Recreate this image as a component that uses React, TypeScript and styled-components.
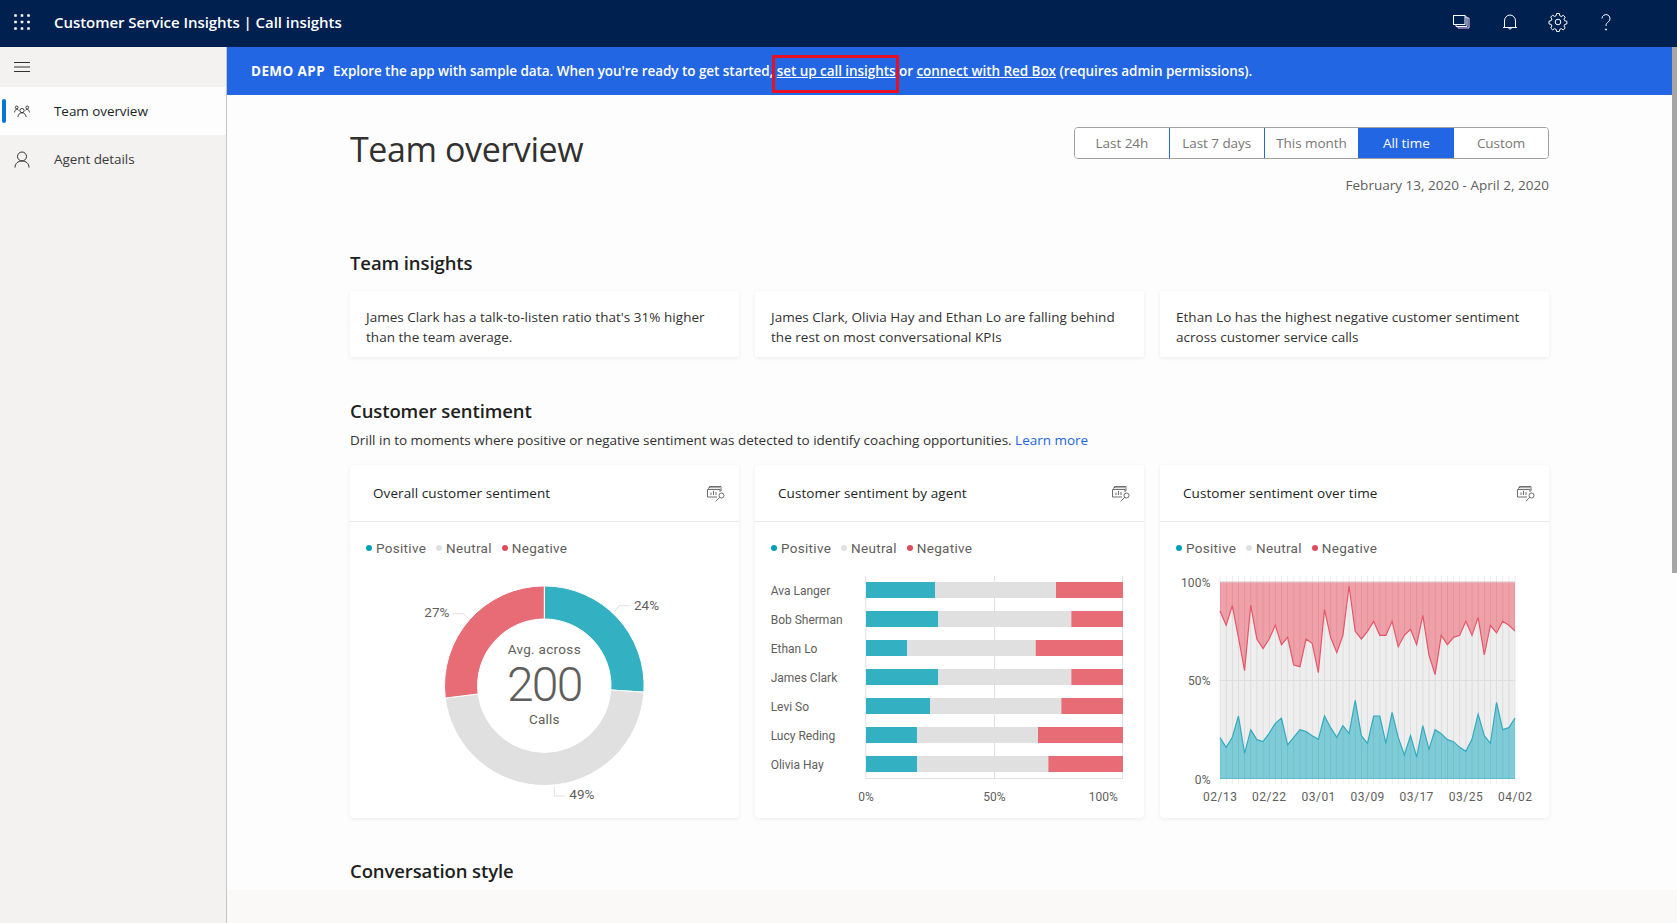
import React from "react";
import styled, { createGlobalStyle } from "styled-components";

const Global = createGlobalStyle`
  html, body { margin: 0; padding: 0; height: 100%; overflow: hidden; background: #faf9f8; }
  body { font-family: "Open Sans", "Noto Sans", sans-serif; }
  #root { height: 100%; }
  * { box-sizing: border-box; }
`;

const Page = styled.div`
  height: 923px;
  display: flex;
  flex-direction: column;
`;
const TopBar = styled.header`
  height: 47px;
  flex: none;
  background: #002050;
  color: #fff;
  display: flex;
  align-items: center;
  padding-bottom: 3px;
`;
const Waffle = styled.div`
  width: 54px;
  padding-left: 14px;
  display: flex;
`;
const AppTitle = styled.div`
  font-size: 15px;
  font-weight: 600;
  letter-spacing: -0.05px;
  flex: 1;
`;
const TopIcons = styled.div`
  display: flex;
  gap: 24px;
  padding-right: 59px;
`;
const TopIcon = styled.div`
  width: 24px;
  height: 24px;
  display: flex;
  align-items: center;
  justify-content: center;
`;
const Body = styled.div`
  flex: 1;
  display: flex;
  min-height: 0;
`;
const Side = styled.nav`
  width: 227px;
  flex: none;
  background: #f3f2f1;
  border-right: 1px solid #c8c6c4;
`;
const Burger = styled.div`
  height: 40px;
  padding-left: 14px;
  display: flex;
  align-items: center;
`;
const NavItem = styled.div<{ $active?: boolean }>`
  height: 48px;
  display: flex;
  align-items: center;
  position: relative;
  background: ${(p) => (p.$active ? "#fdfdfd" : "transparent")};
  color: ${(p) => (p.$active ? "#201f1e" : "#3b3a39")};
  font-size: 13.5px;
  letter-spacing: -0.07px;
  font-weight: ${(p) => (p.$active ? 500 : 400)};
  ${(p) =>
    p.$active
      ? `&::before { content: ""; position: absolute; left: 2px; top: 12px; width: 4px; height: 24px; border-radius: 2px; background: #0078d4; }`
      : ""}
`;
const NavIcon = styled.div`
  width: 54px;
  padding-left: 14px;
  display: flex;
`;
const Main = styled.main`
  flex: 1;
  min-width: 0;
  display: flex;
  flex-direction: column;
  position: relative;
`;
const Banner = styled.div`
  height: 48px;
  flex: none;
  background: #2266e3;
  color: #fff;
  font-size: 13.5px;
  font-weight: 600;
  letter-spacing: -0.05px;
  display: flex;
  align-items: center;
  padding-left: 24px;
  white-space: pre;
  a { color: #fff; text-decoration: underline; }
`;
const Strong = styled.strong`
  font-weight: 700;
  letter-spacing: 0.4px;
  margin-right: 8px;
`;
const HighlightBox = styled.div`
  position: absolute;
  left: 545px;
  top: 8px;
  width: 127px;
  height: 38px;
  border: 3px solid #e81123;
`;
const Scrollbar = styled.div`
  position: absolute;
  right: 0;
  top: 0;
  width: 5px;
  height: 526px;
  background: #a6a6a6;
`;
const Content = styled.div`
  height: 795px;
  flex: none;
  background: #fdfdfd;
  padding: 0 128px 0 123px;
  overflow: hidden;
`;
const HeadRow = styled.div`
  display: flex;
  justify-content: space-between;
  align-items: flex-start;
  padding-top: 32px;
  height: 155px;
`;
const PageTitle = styled.h1`
  margin: 0;
  font-size: 34px;
  font-weight: 500;
  letter-spacing: -0.4px;
  color: #323130;
  line-height: 44px;
`;
const RangeBox = styled.div`
  display: flex;
  flex-direction: column;
  align-items: flex-end;
`;
const Segs = styled.div`
  display: flex;
  width: 475px;
  height: 32px;
  border: 1px solid #a19f9d;
  border-radius: 4px;
  background: #fff;
  overflow: hidden;
`;
const Seg = styled.div<{ $on?: boolean }>`
  flex: 1;
  display: flex;
  align-items: center;
  justify-content: center;
  font-size: 13.5px;
  letter-spacing: -0.05px;
  background: ${(p) => (p.$on ? "#2266e3" : "#fff")};
  color: ${(p) => (p.$on ? "#fff" : "#797775")};
  font-weight: ${(p) => (p.$on ? 500 : 400)};
  & + & { border-left: 1px solid ${(p) => (p.$on ? "#2266e3" : "#a19f9d")}; }
`;
const Dates = styled.div`
  margin-top: 17px;
  font-size: 13.5px;
  letter-spacing: 0.02px;
  color: #605e5c;
`;
const SectionTitle = styled.h2<{ $top?: number }>`
  margin: ${(p) => p.$top ?? 0}px 0 0;
  font-size: 18.5px;
  font-weight: 600;
  letter-spacing: -0.1px;
  color: #201f1e;
  line-height: 26px;
`;
const Cards3 = styled.div<{ $top: number }>`
  display: grid;
  grid-template-columns: repeat(3, 389px);
  gap: 16px;
  margin-top: ${(p) => p.$top}px;
`;
const InsightCard = styled.div`
  background: #fff;
  height: 66px;
  border-radius: 2px;
  box-shadow: 0 1px 4px rgba(0, 0, 0, 0.07);
  padding: 16px 16px 0;
  font-size: 13.5px;
  line-height: 20px;
  font-weight: 500;
  letter-spacing: 0.03px;
  color: #323130;
`;
const Sub = styled.p`
  margin: 6px 0 0;
  font-size: 13.5px;
  line-height: 20px;
  letter-spacing: -0.01px;
  color: #323130;
  a { color: #2266e3; }
`;
const ChartCard = styled.section`
  height: 353px;
  background: #fff;
  border-radius: 4px;
  box-shadow: 0 1px 4px rgba(0, 0, 0, 0.07);
  display: flex;
  flex-direction: column;
`;
const CardHead = styled.div`
  height: 57px;
  flex: none;
  border-bottom: 1px solid #edebe9;
  display: flex;
  align-items: center;
  justify-content: space-between;
  padding: 0 14px 0 23px;
  font-size: 13.5px;
  font-weight: 500;
  letter-spacing: 0.08px;
  color: #201f1e;
`;
const Legend = styled.div`
  display: flex;
  gap: 10px;
  padding: 17px 0 0 16px;
  font-family: Roboto, sans-serif;
  font-size: 13.5px;
  letter-spacing: 0.3px;
  line-height: 18px;
  color: #605e5c;
`;
const LegendItem = styled.span<{ $c: string }>`
  display: inline-flex;
  align-items: center;
  gap: 4px;
  &::before { content: ""; width: 6px; height: 6px; border-radius: 50%; background: ${(p) => p.$c}; }
`;
const ChartWrap = styled.div`
  flex: 1;
  min-height: 0;
`;
const ChartSvg = styled.svg`
  display: block;
  text {
    font-family: Roboto, sans-serif;
    fill: #605e5c;
  }
`;

const Ico = ({ children, w = 20, h = 20, vb = "0 0 20 20", c = "#fff" }: any) => (
  <svg width={w} height={h} viewBox={vb} fill="none" stroke={c} strokeWidth={1}>{children}</svg>
);

const InspectIcon = () => (
  <svg width="18" height="17" viewBox="0 0 18 17" fill="none" stroke="#605e5c" strokeWidth="0.9">
    <path d="M2.500 3V1.500H14V6" />
    <path d="M1.500 4.500V2.700H13" opacity=".7" />
    <path d="M10 12H.5V4.500H13V7" />
    <path d="M4 10V7.500M6.500 10V5.800M9 10V7" />
    <circle cx="14.500" cy="10.500" r="2.500" />
    <path d="M12.700 12.300L8.800 16.300" />
  </svg>
);

const Legends = () => (
  <Legend>
    <LegendItem $c="#00a0b6">Positive</LegendItem>
    <LegendItem $c="#e0e0e0">Neutral</LegendItem>
    <LegendItem $c="#e04c5c">Negative</LegendItem>
  </Legend>
);

const polar = (cx: number, cy: number, r: number, deg: number) => {
  const a = ((deg - 90) * Math.PI) / 180;
  return [cx + r * Math.cos(a), cy + r * Math.sin(a)];
};
const ring = (cx: number, cy: number, R: number, r: number, a: number, b: number) => {
  const [x1, y1] = polar(cx, cy, R, a);
  const [x2, y2] = polar(cx, cy, R, b);
  const [x3, y3] = polar(cx, cy, r, b);
  const [x4, y4] = polar(cx, cy, r, a);
  const large = b - a > 180 ? 1 : 0;
  return `M${x1} ${y1}A${R} ${R} 0 ${large} 1 ${x2} ${y2}L${x3} ${y3}A${r} ${r} 0 ${large} 0 ${x4} ${y4}Z`;
};

const Donut = () => (
  <ChartSvg width="389" height="261" viewBox="0 0 389 261">
    <path d={ring(194.3, 128.7, 99.8, 66.7, 0, 93.7)} fill="#33b1c3" stroke="#fff" strokeWidth="1" />
    <path d={ring(194.3, 128.7, 99.8, 66.7, 93.7, 262.9)} fill="#e0e0e0" stroke="#fff" strokeWidth="1" />
    <path d={ring(194.3, 128.7, 99.8, 66.7, 262.9, 360)} fill="#e86c76" stroke="#fff" strokeWidth="1" />
    <path d="M102.300 56.700H113.300L118.300 61.700" stroke="#e1dfdd" fill="none" />
    <path d="M279.300 48.700H269.300L264 55.300" stroke="#e1dfdd" fill="none" />
    <path d="M204.300 230.300V239H215" stroke="#e1dfdd" fill="none" />
    <text x="74.300" y="60.300" fontSize="13.500">27%</text>
    <text x="284" y="53" fontSize="13.500">24%</text>
    <text x="219.300" y="242" fontSize="13.500">49%</text>
    <text x="194.300" y="97.300" fontSize="13.500" letterSpacing=".3" textAnchor="middle">Avg. across</text>
    <text x="194.300" y="143.700" fontSize="48" fontWeight="300" letterSpacing="-1.800" textAnchor="middle">200</text>
    <text x="194.300" y="167.300" fontSize="13.500" letterSpacing=".2" textAnchor="middle">Calls</text>
  </ChartSvg>
);

const agents: [string, number, number][] = [
  ["Ava Langer", 555, 918],
  ["Bob Sherman", 564, 964],
  ["Ethan Lo", 471, 857],
  ["James Clark", 564, 964],
  ["Levi So", 540, 934],
  ["Lucy Reding", 501, 864],
  ["Olivia Hay", 501, 895],
];

// viewBox is the 3× measure of the reference chart so coordinates stay readable
const Bars = () => (
  <ChartSvg width="389" height="261" viewBox="0 0 1167 783">
    <g transform="translate(-15,-291)">
      {[347, 733, 1117].map((x) => (
        <rect key={x} x={x - 1} y={348} width={3} height={607} fill="#e1e1e1" />
      ))}
      <rect x={346} y={954} width={774} height={3} fill="#e1e1e1" />
      {agents.map(([n, a, b], i) => {
        const y = 366 + i * 87;
        return (
          <g key={n}>
            <rect x={348} y={y} width={a - 348} height={48} fill="#33b1c3" />
            <rect x={a} y={y} width={b - a} height={48} fill="#e0e0e0" />
            <rect x={b} y={y} width={1119 - b} height={48} fill="#e86c76" />
            <text x={62} y={y + 39} fontSize="36">{n}</text>
          </g>
        );
      })}
      <text x={348} y={1022} fontSize="36" textAnchor="middle">0%</text>
      <text x={733} y={1022} fontSize="36" textAnchor="middle">50%</text>
      <text x={1060} y={1022} fontSize="36" textAnchor="middle">100%</text>
    </g>
  </ChartSvg>
);

const px = Array.from({ length: 49 }, (_, i) => 195 + (i * 885) / 48);
const neg = [153,196,137,232,332,136,237,266,237,196,254,232,315,320,237,250,338,149,232,278,226,78,214,237,214,184,226,226,184,260,226,208,254,166,285,344,226,254,232,226,184,226,172,285,196,219,184,196,213];
const pos = [533,562,532,468,580,509,539,545,520,490,474,555,532,509,515,527,538,468,503,532,497,521,421,527,550,468,468,550,457,532,585,527,591,497,568,509,521,539,545,562,574,538,462,527,550,427,509,503,474];
const line = (ys: number[]) => ys.map((y, i) => `${px[i]} ${y}`).join("L");

const TimeChart = () => (
  <ChartSvg width="389" height="261" viewBox="0 0 1167 783">
    <g transform="translate(-15,9)">
      <rect x={195} y={65} width={885} height={591} fill="#eeeeee" />
      <path d={`M195 65L${line(neg)}L1080 65Z`} fill="#f0a0a8" />
      <path d={`M195 656L${line(pos)}L1080 656Z`} fill="#7fccd9" />
      {px.map((x) => (
        <rect key={x} x={x - 1} y={48} width={2.4} height={625} fill="#000" opacity={0.09} />
      ))}
      <rect x={193} y={64} width={888} height={3} fill="#e1e1e1" />
      <rect x={193} y={360} width={888} height={3} fill="#dedede" />
      <path d={`M${line(neg)}`} fill="none" stroke="#e4576a" strokeWidth="3.600" />
      <path d={`M${line(pos)}`} fill="none" stroke="#33aabd" strokeWidth="3.600" />
      <rect x={195} y={654} width={885} height={3} fill="#5cbccb" />
      {[["100%", 80], ["50%", 375], ["0%", 672]].map(([t, y]) => (
        <text key={t as string} x={167} y={y as number} fontSize="36" letterSpacing="0.500" textAnchor="end">{t}</text>
      ))}
      {[["02/13", 196], ["02/22", 343], ["03/01", 491], ["03/09", 638], ["03/17", 785], ["03/25", 933], ["04/02", 1081]].map(([t, x]) => (
        <text key={t as string} x={x as number} y={724} fontSize="36" letterSpacing="1.500" textAnchor="middle">{t}</text>
      ))}
    </g>
  </ChartSvg>
);

export default function App() {
  return (
    <Page>
      <Global />
      <TopBar>
        <Waffle>
          <svg width="16" height="16" viewBox="0 0 16 16" fill="#fff">
            {[1.5, 8, 14.5].flatMap((y) => [1.5, 8, 14.5].map((x) => <rect key={`${x}${y}`} x={x - 1.3} y={y - 1.3} width="2.600" height="2.600" rx=".5" />))}
          </svg>
        </Waffle>
        <AppTitle>Customer Service Insights | Call insights</AppTitle>
        <TopIcons>
          <TopIcon>
            <Ico>
              <rect x="1.500" y="3.500" width="11.500" height="9" />
              <path d="M13 5H15V14.500H4V12.500" />
              <path d="M15 6H17V16H6V14.500" stroke="#f3c6ff" />
            </Ico>
          </TopIcon>
          <TopIcon>
            <Ico>
              <path d="M4.500 15.500V9a5.500 6 0 0 1 11 0v6.500M3 15.500h14" />
              <path d="M8.500 16a1.600 1.600 0 0 0 3 0" />
            </Ico>
          </TopIcon>
          <TopIcon>
            <Ico>
              <circle cx="10" cy="10" r="2.800" />
              <path d="M8.700 1.800h2.600l.5 2.300 1.500.7 2-1.200 1.900 1.900-1.200 2 .6 1.500 2.300.6v2.600l-2.300.6-.6 1.500 1.200 2-1.900 1.900-2-1.200-1.500.6-.6 2.300H8.700l-.6-2.300-1.500-.6-2 1.200-1.900-1.900 1.200-2-.6-1.500-2.300-.6V9.500l2.300-.6.6-1.500-1.200-2 1.900-1.900 2 1.200 1.500-.7z" transform="translate(0 -.3)" />
            </Ico>
          </TopIcon>
          <TopIcon>
            <Ico>
              <path d="M6 6.500a4 4 0 1 1 6.500 3.200C11 11 10 11.500 10 14" />
              <circle cx="10" cy="17.500" r=".6" fill="#fff" />
            </Ico>
          </TopIcon>
        </TopIcons>
      </TopBar>
      <Body>
        <Side>
          <Burger>
            <svg width="16" height="10" viewBox="0 0 16 10" stroke="#323130" strokeWidth="1">
              <path d="M0 .5h16M0 5h16M0 9.500h16" />
            </svg>
          </Burger>
          <NavItem $active>
            <NavIcon>
              <Ico c="#323130" w={16} h={13} vb="0 0 17 14">
                <circle cx="8.500" cy="6" r="2.300" />
                <path d="M4 13c.5-3 2-4.600 4.500-4.600S12.500 10 13 13" />
                <circle cx="2.800" cy="2.600" r="1.500" />
                <path d="M.5 8c.2-2 1-3.300 2.300-3.300.9 0 1.500.4 2 1" />
                <circle cx="14.200" cy="2.600" r="1.500" />
                <path d="M16.500 8c-.2-2-1-3.300-2.300-3.300-.9 0-1.500.4-2 1" />
              </Ico>
            </NavIcon>
            Team overview
          </NavItem>
          <NavItem>
            <NavIcon>
              <Ico c="#323130" w={16} h={17} vb="0 0 16 17">
                <circle cx="8" cy="5.500" r="4.500" />
                <path d="M1 16.500c0-4 3-6.500 7-6.500s7 2.500 7 6.500" />
              </Ico>
            </NavIcon>
            Agent details
          </NavItem>
        </Side>
        <Main>
          <Banner>
            <Strong>DEMO APP</Strong>
            {"Explore the app with sample data. When you're ready to get started, "}
            <a href="#a">set up call insights</a>
            {" or "}
            <a href="#b">connect with Red Box</a>
            {" (requires admin permissions)."}
          </Banner>
          <HighlightBox />
          <Scrollbar />
          <Content>
            <HeadRow>
              <PageTitle>Team overview</PageTitle>
              <RangeBox>
                <Segs>
                  <Seg>Last 24h</Seg>
                  <Seg>Last 7 days</Seg>
                  <Seg>This month</Seg>
                  <Seg $on>All time</Seg>
                  <Seg>Custom</Seg>
                </Segs>
                <Dates>February 13, 2020 - April 2, 2020</Dates>
              </RangeBox>
            </HeadRow>
            <SectionTitle>Team insights</SectionTitle>
            <Cards3 $top={15}>
              <InsightCard>James Clark has a talk-to-listen ratio that's 31% higher than the team average.</InsightCard>
              <InsightCard>James Clark, Olivia Hay and Ethan Lo are falling behind the rest on most conversational KPIs</InsightCard>
              <InsightCard>Ethan Lo has the highest negative customer sentiment across customer service calls</InsightCard>
            </Cards3>
            <SectionTitle $top={41}>Customer sentiment</SectionTitle>
            <Sub>
              Drill in to moments where positive or negative sentiment was detected to identify coaching opportunities. <a>Learn more</a>
            </Sub>
            <Cards3 $top={15}>
              <ChartCard>
                <CardHead>Overall customer sentiment<InspectIcon /></CardHead>
                <Legends />
                <ChartWrap><Donut /></ChartWrap>
              </ChartCard>
              <ChartCard>
                <CardHead>Customer sentiment by agent<InspectIcon /></CardHead>
                <Legends />
                <ChartWrap><Bars /></ChartWrap>
              </ChartCard>
              <ChartCard>
                <CardHead>Customer sentiment over time<InspectIcon /></CardHead>
                <Legends />
                <ChartWrap><TimeChart /></ChartWrap>
              </ChartCard>
            </Cards3>
            <SectionTitle $top={40}>Conversation style</SectionTitle>
          </Content>
        </Main>
      </Body>
    </Page>
  );
}
